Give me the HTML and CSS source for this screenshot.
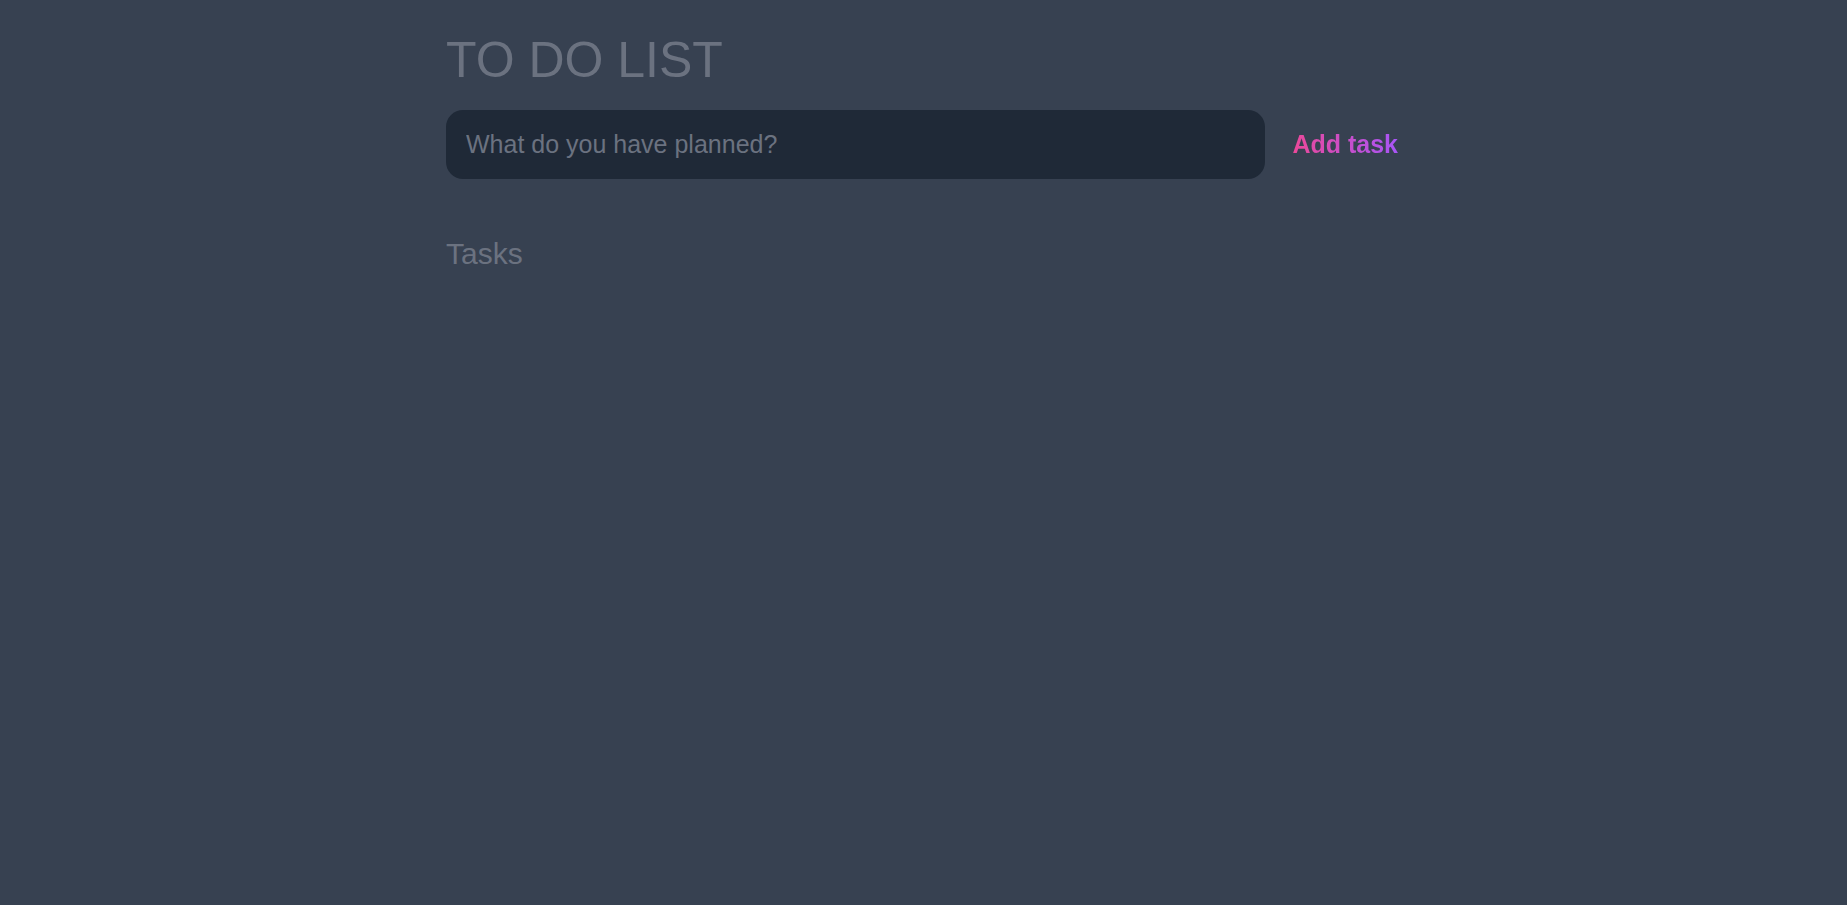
FILE: index.html
```html
<!DOCTYPE html>
<html lang="en">
<head>
<meta charset="utf-8">
<title>To Do List</title>
<link rel="stylesheet" href="styles.css">
</head>
<body>
<main class="container">
  <h1 class="title">TO DO LIST</h1>
  <form class="new-task" onsubmit="return false">
    <input class="task-input" type="text" placeholder="What do you have planned?">
    <button class="add-btn" type="submit"><span class="add-text">Add task</span></button>
  </form>
  <section class="tasks">
    <h2 class="tasks-title">Tasks</h2>
  </section>
</main>
</body>
</html>
```

FILE: styles.css
```css
html, body {
  margin: 0;
  padding: 0;
  height: 100%;
}
body {
  background: #374151;
  font-family: "Liberation Sans", Arial, sans-serif;
  color: #6b7280;
}
.container {
  width: 955px;
  margin: 0 auto;
  padding-top: 35px;
  display: flex;
  flex-direction: column;
}
.title {
  margin: 0;
  font-size: 50px;
  font-weight: 400;
  line-height: 1;
  color: #6b7280;
}
.new-task {
  display: flex;
  align-items: center;
  gap: 27px;
  margin-top: 25px;
}
.task-input {
  flex: 1;
  height: 69px;
  box-sizing: border-box;
  border: none;
  outline: none;
  border-radius: 17px;
  background: #1f2937;
  padding: 0 20px;
  font-family: inherit;
  font-size: 25px;
  color: #d1d5db;
}
.task-input::placeholder {
  color: #6b7280;
  opacity: 1;
}
.add-btn {
  border: none;
  background: none;
  padding: 0;
  margin-right: 3px;
  cursor: pointer;
  font-family: inherit;
  font-size: 25px;
  font-weight: 700;
  line-height: 1;
}
.add-text {
  background: linear-gradient(90deg, #ec4899, #a855f7);
  -webkit-background-clip: text;
  background-clip: text;
  color: transparent;
}
.tasks {
  margin-top: 60px;
}
.tasks-title {
  margin: 0;
  font-size: 30px;
  font-weight: 400;
  line-height: 1;
  color: #6b7280;
}
```
